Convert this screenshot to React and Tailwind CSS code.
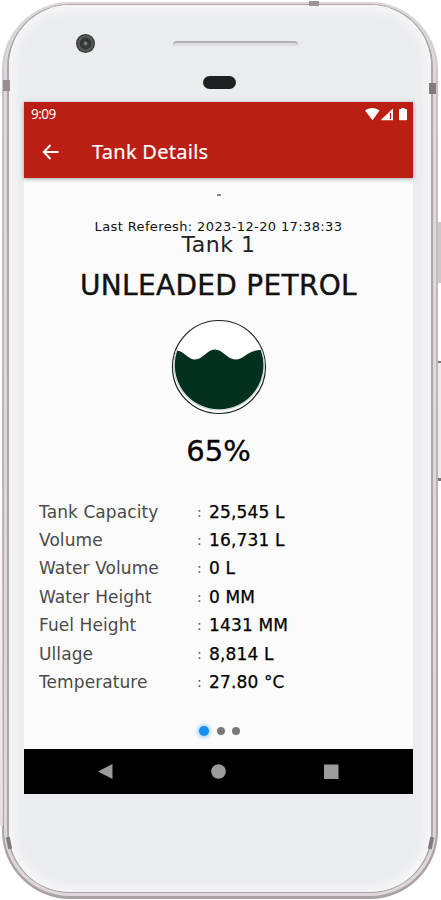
/**
 * Tank details screen shown inside a phone frame.
 */
const readings = [
  { label: 'Tank Capacity', value: '25,545 L' },
  { label: 'Volume', value: '16,731 L' },
  { label: 'Water Volume', value: '0 L' },
  { label: 'Water Height', value: '0 MM' },
  { label: 'Fuel Height', value: '1431 MM' },
  { label: 'Ullage', value: '8,814 L' },
  { label: 'Temperature', value: '27.80 °C' },
];

function StatusIcons() {
  return (
    <svg width="44" height="14" viewBox="0 0 44 14" fill="#fff">
      <path d="M0 3.600C4 .1 10.500 .1 14.500 3.600L7.500 13.200z" />
      <path d="M15.500 13.200L28 1.500V13.200z" />
      <path d="M25.500 6V12" stroke="#bb1e13" strokeWidth="1.200" />
      <path d="M34 3Q34 2 35 2H36.300V1H39.500V2H41Q42 2 42 3V12.500Q42 13.200 41 13.200H35Q34 13.200 34 12.500z" />
    </svg>
  );
}

function AppBar() {
  return (
    <header className="relative z-10 h-[76px] shrink-0 bg-[#bb1e13] text-white shadow-[0_1px_4px_rgba(0,0,0,0.35)] font-['Noto_Sans',sans-serif]">
      <div className="flex h-6 items-center justify-between pl-[7px] pr-[4px]">
        <span className="text-[13.5px] leading-6 tracking-[-0.5px]">9:09</span>
        <StatusIcons />
      </div>
      <div className="flex h-[52px] items-center pl-[18px]">
        <svg width="17" height="16" viewBox="0 0 17 16" fill="none" stroke="#fff" strokeWidth="2">
          <path d="M16.500 8H2M8.500 1L1.800 8L8.500 15" />
        </svg>
        <h1 className="ml-[33px] text-[20px] leading-[52px] tracking-[0.27px] [-webkit-text-stroke:0.2px_#fff]">
          Tank Details
        </h1>
      </div>
    </header>
  );
}

function TankGauge() {
  return (
    <svg className="mt-[15px] shrink-0" width="96" height="96" viewBox="0 0 96 96">
      <circle cx="48" cy="48" r="46.500" fill="#fff" stroke="#17211c" strokeWidth="1.200" />
      <path
        d="M5.500 31.500C13 32 17 40.500 24 40.500C32 40.500 36 30.500 44 30.500C52 30.500 56 40.500 64.500 40.500C73 40.500 77 30.500 90.500 31A45 45 0 1 1 5.500 31.500z"
        fill="#03301f"
      />
      <path d="M5.500 31.500A45 45 0 1 0 90.500 31" fill="none" stroke="#d3d9d6" strokeWidth="1.400" />
    </svg>
  );
}

function Readings() {
  return (
    <dl className="mt-[26.5px] self-stretch pl-[15px] text-[17px]">
      {readings.map((r) => (
        <div key={r.label} className="flex h-[28.4px] items-center leading-[28px]">
          <dt className="w-[158px] tracking-[0.08px] text-[#4a4a4a]">{r.label}</dt>
          <dd className="flex text-black">
            <span className="w-[12px] text-[14px] text-[#555]">:</span>
            <span className="tracking-[0.15px] [-webkit-text-stroke:0.25px_#000]">{r.value}</span>
          </dd>
        </div>
      ))}
    </dl>
  );
}

function NavBar() {
  return (
    <nav className="h-[45px] shrink-0 bg-black">
      <svg width="389" height="44" viewBox="0 0 389 44" fill="#9b9b9b">
        <path d="M74 22.500L88.500 15V30z" />
        <circle cx="194.500" cy="22.500" r="7.300" />
        <rect x="300" y="15.500" width="14.500" height="14.500" rx="0.500" />
      </svg>
    </nav>
  );
}

function Screen() {
  return (
    <div className="flex h-[692px] w-[389px] flex-col bg-[#fbfbfb]">
      <AppBar />
      <main className="flex min-h-0 flex-1 flex-col items-center font-['DejaVu_Sans',sans-serif] text-[#111]">
        <span className="mt-[16px] h-[2px] w-[4px] shrink-0 bg-[#858585]" />
        <p className="mt-[23px] whitespace-nowrap text-[13px] leading-[16px] tracking-[0.38px]">
          Last Referesh: 2023-12-20 17:38:33
        </p>
        <h2 className="text-[22px] leading-[20px] tracking-[0.5px] text-[#222]">Tank 1</h2>
        <h3 className="mt-[13px] whitespace-nowrap text-[28px] leading-[36px] tracking-[0.3px] [-webkit-text-stroke:0.4px_#111]">
          UNLEADED PETROL
        </h3>
        <TankGauge />
        <p className="mt-[16px] text-[29px] leading-[40px] text-black [-webkit-text-stroke:0.3px_#000]">65%</p>
        <Readings />
        <div className="mt-auto mb-[13px] ml-[2px] flex h-[10px] items-center">
          <span className="size-[10px] rounded-full bg-[#178df0] shadow-[0_0_4px_1px_rgba(33,150,243,0.55)]" />
          <span className="ml-2 size-[8px] rounded-full bg-[#797979]" />
          <span className="ml-[7px] size-[8px] rounded-full bg-[#797979]" />
        </div>
      </main>
      <NavBar />
    </div>
  );
}

// Side rails and antenna lines on the metal rim
function Rim() {
  return (
    <>
      <i className="absolute left-0 top-[480px] h-[346px] w-[3px] rounded bg-linear-to-b from-transparent to-[#e3dddf]" />
      <i className="absolute right-0 top-[222px] h-[61px] w-[3px] bg-[#cfc8cb]" />
      <i className="absolute right-0 top-[361px] h-[2px] w-[3px] bg-[#777]" />
      <i className="absolute right-0 top-[363px] h-[116px] w-[3px] bg-[#eee9eb]" />
      <i className="absolute right-0 top-[478px] h-[3px] w-[3px] bg-[#777]" />
      <i className="absolute left-[3px] top-[80px] h-[11px] w-[7px] bg-[#96908f]" />
      <i className="absolute left-[429px] top-[83px] h-[11px] w-[7px] bg-[#817b7c]" />
      <i className="absolute left-[309px] top-[1px] h-[5px] w-[10px] bg-[#9b9395]" />
      <i className="absolute left-[7px] top-[837px] h-[12px] w-[4px] -rotate-12 bg-[#807b7c]" />
      <i className="absolute left-[429px] top-[837px] h-[12px] w-[4px] rotate-12 bg-[#807b7c]" />
    </>
  );
}

export default function App() {
  return (
    <div className="relative h-[900px] w-[441px] overflow-hidden bg-white px-[2px] pt-[2px]">
      <div className="h-[897px] w-[436px] rounded-[68px] bg-[#c5bfc2] bg-linear-to-b from-[#ddd4d7] from-0% via-[#c9c2c5] via-10% to-[#aaa3a6] px-[2px] pb-[3px] pt-[1px]">
        <div className="h-full rounded-[66px] bg-[#ded8db] px-[3px] pb-[3px] pt-[1px]">
          <div className="h-full rounded-[63px] bg-[#aaa5a8] px-[2px] pb-px pt-[1px]">
            <div className="relative flex h-full flex-col rounded-[61px] bg-[#ebecee] px-[15px] shadow-[inset_0_0_9px_6px_#f6f6f9]">
              <div className="relative h-[97px] shrink-0">
                <span className="absolute left-[52px] top-[29px] size-[19px] rounded-full bg-[radial-gradient(circle,#77765c_0_12%,#30383a_18%_40%,#565c5e_48%_56%,#343a3c_64%)]" />
                <span className="absolute left-[149px] top-[36px] h-[5px] w-[125px] rounded-t border-t-2 border-[#adadb4] bg-[#dddde0]" />
                <span className="absolute left-[179px] top-[71px] h-[13px] w-[33px] rounded-full bg-[#1d2122]" />
              </div>
              <Screen />
            </div>
          </div>
        </div>
      </div>
      <Rim />
    </div>
  );
}
